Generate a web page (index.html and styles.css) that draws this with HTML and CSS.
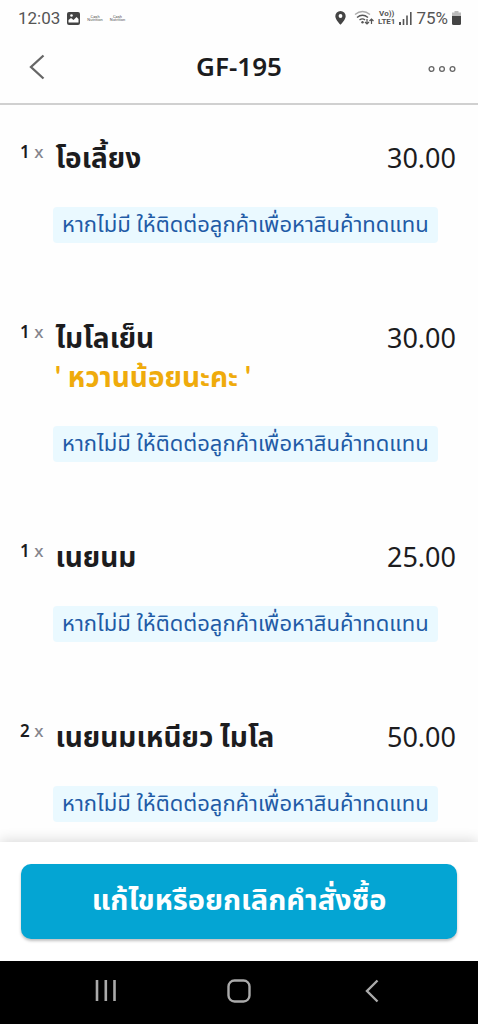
FILE: index.html
```html
<!DOCTYPE html>
<html lang="th">
<head>
<meta charset="utf-8">
<meta name="viewport" content="width=device-width, initial-scale=1">
<title>GF-195</title>
<link rel="stylesheet" href="styles.css">
</head>
<body>
<div class="status">
  <div class="status-group">
    <span>12:03</span>
    <svg class="photo" width="13" height="13" viewBox="0 0 13 13"><rect width="13" height="13" rx="2" fill="#444"/><path d="M1.500 10.500V8l2.500-2 2.500 2 3-3 2 2v3.500z" fill="#fff"/><circle cx="4.500" cy="3.500" r="1.300" fill="#fff"/></svg>
    <span class="app-mark"><span>Cash</span><span>Nutrition</span></span>
    <span class="app-mark"><span>Cash</span><span>Nutrition</span></span>
  </div>
  <div class="status-group status-right">
    <svg width="11" height="14" viewBox="0 0 11 14"><path d="M5.500 0A5.200 5.200 0 0 0 .3 5.200C.3 8.500 5.500 13.800 5.500 13.800S10.700 8.500 10.700 5.200A5.200 5.200 0 0 0 5.500 0z" fill="#444"/><circle cx="5.500" cy="5" r="1.900" fill="#fff"/></svg>
    <svg class="wifi" width="20" height="16" viewBox="0 0 20 16" fill="none" stroke-width="1.400"><path d="M1 4.500Q8.500-1.500 16 4.500" stroke="#aaa"/><path d="M3 7.500Q8.500 3 14 7.500M5.500 10Q8.500 7.800 11 10" stroke="#555"/><circle cx="8.500" cy="12.300" r="1.200" fill="#555"/><path d="M13 9v5M11 12l2 2 2-2M17.500 14V9M15.500 11l2-2 2 2" stroke="#555" stroke-width="1.200"/></svg>
    <span class="lte"><span>Vo))</span><span>LTE1</span></span>
    <svg width="13" height="14" viewBox="0 0 13 14" fill="#555"><path d="M0 11h2v3H0zM3.700 8h1.600v6H3.700zM7.200 4.500h1.600V14H7.200zM11 1h1.600v13H11z"/></svg>
    <span class="percent">75%</span>
    <svg width="9" height="14" viewBox="0 0 9 14"><path d="M2.500 0h4v1.500H9V6H0V1.500h2.500z" fill="#bbb"/><path d="M0 5h9v7.500q0 1.500-1.500 1.500h-6Q0 14 0 12.500z" fill="#444"/></svg>
  </div>
</div>
<header class="header">
  <button class="icon-button" aria-label="ย้อนกลับ"><svg width="16" height="26" viewBox="0 0 16 26"><path d="M14.500 1.500 2 13l12.500 11.500" fill="none" stroke="#666" stroke-width="2.300"/></svg></button>
  <h1>GF-195</h1>
  <button class="icon-button more" aria-label="เพิ่มเติม"><svg width="28" height="8" viewBox="0 0 28 8" fill="none" stroke="#666" stroke-width="1.300"><circle cx="3.500" cy="4" r="2.400"/><circle cx="14" cy="4" r="2.400"/><circle cx="24.500" cy="4" r="2.400"/></svg></button>
</header>
<main class="items">
  <article class="item">
    <div class="row"><span class="qty"><b>1</b> x</span><h2>โอเลี้ยง</h2><span class="price">30.00</span></div>
    <p class="tag">หากไม่มี ให้ติดต่อลูกค้าเพื่อหาสินค้าทดแทน</p>
  </article>
  <article class="item">
    <div class="row"><span class="qty"><b>1</b> x</span><h2>ไมโลเย็น</h2><span class="price">30.00</span></div>
    <p class="note">' หวานน้อยนะคะ '</p>
    <p class="tag">หากไม่มี ให้ติดต่อลูกค้าเพื่อหาสินค้าทดแทน</p>
  </article>
  <article class="item">
    <div class="row"><span class="qty"><b>1</b> x</span><h2>เนยนม</h2><span class="price">25.00</span></div>
    <p class="tag">หากไม่มี ให้ติดต่อลูกค้าเพื่อหาสินค้าทดแทน</p>
  </article>
  <article class="item">
    <div class="row"><span class="qty"><b>2</b> x</span><h2>เนยนมเหนียว ไมโล</h2><span class="price">50.00</span></div>
    <p class="tag">หากไม่มี ให้ติดต่อลูกค้าเพื่อหาสินค้าทดแทน</p>
  </article>
</main>
<footer class="footer"><button class="primary">แก้ไขหรือยกเลิกคำสั่งซื้อ</button></footer>
<nav class="nav">
  <button aria-label="แอปล่าสุด"><svg width="22" height="24" viewBox="0 0 22 24"><path d="M2 1v21M10.800 1v21M19.500 1v21" stroke="#aaa" stroke-width="2.600"/></svg></button>
  <button aria-label="หน้าหลัก"><svg width="24" height="24" viewBox="0 0 24 24"><rect x="1.500" y="1.500" width="21" height="21" rx="6" fill="none" stroke="#aaa" stroke-width="2.400"/></svg></button>
  <button aria-label="กลับ"><svg width="14" height="24" viewBox="0 0 14 24"><path d="M12.500 1.500 2 12l10.500 10.500" fill="none" stroke="#aaa" stroke-width="2.400"/></svg></button>
</nav>
</body>
</html>
```
FILE: styles.css
```css
* { box-sizing: border-box; }
body {
  margin: 0;
  min-height: 100vh;
  display: flex;
  flex-direction: column;
  background: #fefefe;
  color: #1c1c1e;
  font-family: "Noto Sans", "Noto Sans Thai", sans-serif;
}
h1, h2, p { margin: 0; }
button { border: 0; padding: 0; background: none; font: inherit; color: inherit; }
svg { display: block; flex: none; }

.status {
  height: 36px;
  padding: 0 17px 0 18px;
  display: flex;
  align-items: center;
  justify-content: space-between;
  font: 17px/20px Roboto, sans-serif;
  color: #555;
}
.status-group { display: flex; align-items: center; gap: 7px; }
.status-right { gap: 4px; }
.wifi { margin-left: 4px; }
.app-mark, .lte { display: flex; flex-direction: column; align-items: center; }
.app-mark { font-size: 4px; line-height: 3px; }
.lte { font-size: 8px; line-height: 8px; font-weight: 700; }

.header {
  height: 69px;
  padding: 0 22px 6px;
  display: grid;
  grid-template-columns: 1fr auto 1fr;
  align-items: center;
  border-bottom: 2px solid #d0d0d0;
}
.header h1 { font-size: 26px; line-height: 34px; font-weight: 600; padding-bottom: 2px; }
.icon-button { padding: 0 7px; justify-self: start; }
.more { padding: 4px 0 0; justify-self: end; }

.items { flex: 1; padding: 33px 22px 0 20px; }
.item { padding-bottom: 75px; }
.item:last-child { padding-bottom: 20px; }
.row { display: flex; height: 39px; }
.row h2 {
  flex: 1;
  padding-left: 12px;
  font: 700 28px/38px Lato, "Noto Sans Thai", sans-serif;
}
.qty { font-size: 17px; line-height: 28px; font-weight: 500; color: #85858d; }
.qty b { font-weight: 600; color: #1c1c1e; }
.price { font-size: 27px; line-height: 40px; }
.note {
  padding-left: 35px;
  font: 700 28px/39px Lato, "Noto Sans Thai", sans-serif;
  color: #efab0c;
}
.note + .tag { margin-top: 30px; }
.tag {
  width: fit-content;
  margin: 30px 0 0 33px;
  padding: 0 9px 2px;
  border-radius: 4px;
  background: #eaf9ff;
  color: #1f5ba6;
  font: 400 22px/34px Lato, "Noto Sans Thai", sans-serif;
}

.footer { padding: 22px 21px; background: #fff; box-shadow: 0 -2px 12px rgba(0, 0, 0, .14); }
.primary {
  width: 100%;
  height: 75px;
  padding-bottom: 6px;
  border-radius: 10px;
  background: #04a5d3;
  box-shadow: 0 2px 3px rgba(0, 0, 0, .25);
  color: #fff;
  font: 700 29px/40px Lato, "Noto Sans Thai", sans-serif;
}
.nav {
  height: 63px;
  padding: 0 39px 4px;
  display: grid;
  grid-template-columns: repeat(3, 1fr);
  place-items: center;
  background: #000;
}
```
